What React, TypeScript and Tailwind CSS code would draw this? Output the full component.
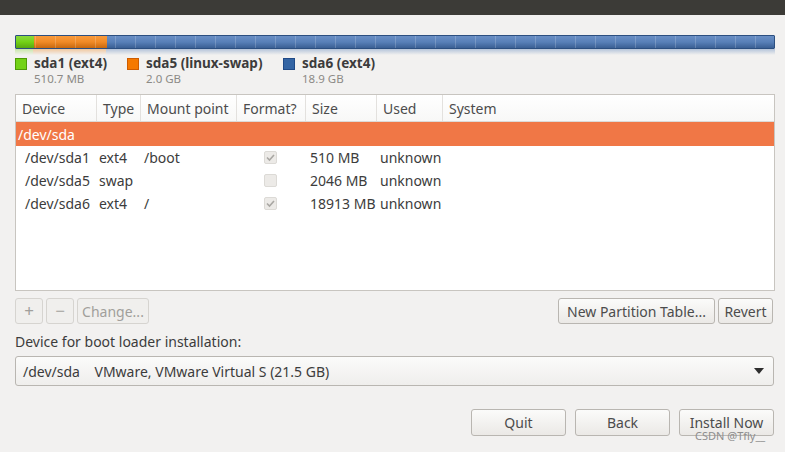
const font = { fontFamily: '"Noto Sans", "Open Sans", sans-serif' }

const columns = [
  { label: 'Device', w: 'w-[81px]' },
  { label: 'Type', w: 'w-[44px]' },
  { label: 'Mount point', w: 'w-[96px]' },
  { label: 'Format?', w: 'w-[69px]' },
  { label: 'Size', w: 'w-[71px]' },
  { label: 'Used', w: 'w-[66px]' },
  { label: 'System', w: 'flex-1' },
]

const rows = [
  { dev: '/dev/sda1', type: 'ext4', mount: '/boot', format: true, size: '510 MB', used: 'unknown' },
  { dev: '/dev/sda5', type: 'swap', mount: '', format: false, size: '2046 MB', used: 'unknown' },
  { dev: '/dev/sda6', type: 'ext4', mount: '/', format: true, size: '18913 MB', used: 'unknown' },
]

const legend = [
  { name: 'sda1 (ext4)', size: '510.7 MB', swatch: 'bg-[#73d216] border-[#4e9a06]', w: 'w-[112px]' },
  { name: 'sda5 (linux-swap)', size: '2.0 GB', swatch: 'bg-[#f57900] border-[#ce5c00]', w: 'w-[156px]' },
  { name: 'sda6 (ext4)', size: '18.9 GB', swatch: 'bg-[#3465a4] border-[#204a87]', w: 'w-[120px]' },
]

function Check({ on }: { on: boolean }) {
  return (
    <div className="w-[13px] h-[13px] rounded-[2px] border border-[#dcdad6] bg-[#eceae7] flex items-center justify-center">
      {on && (
        <svg width="11" height="11" viewBox="0 0 11 11">
          <path d="M2 5.5 L4.5 8 L9 3" fill="none" stroke="#a9a7a3" strokeWidth="1.6" />
        </svg>
      )}
    </div>
  )
}

function Btn({ children, className = '', dim = false }: { children: React.ReactNode; className?: string; dim?: boolean }) {
  return (
    <div
      className={`h-[26px] flex items-center justify-center rounded-[3px] border text-[14px] ${
        dim
          ? 'border-[#d6d4d0] bg-[#f0efed] text-[#a19f9b]'
          : 'border-[#b9b6b1] bg-gradient-to-b from-[#fbfbfa] to-[#ebe9e6] text-[#4c4c4c]'
      } ${className}`}
    >
      {children}
    </div>
  )
}

export default function App() {
  return (
    <div style={font} className="w-[785px] h-[452px] bg-[#f2f1f0] flex flex-col overflow-hidden relative">
      <div className="h-[15px] bg-[#3c3b37] shrink-0" />

      <div className="pl-[15px] pr-[11px] flex flex-col">
        {/* partition bar */}
        <div className="mt-[20px] relative h-[14px] flex border border-[#2c4f80] rounded-[1px] overflow-hidden w-[760px]">
          <div className="w-[18px] bg-gradient-to-b from-[#8ad93a] via-[#73d216] to-[#5aa812]" />
          <div className="w-[73px] bg-gradient-to-b from-[#f99a3a] via-[#f08a26] to-[#c8680e]" />
          <div className="flex-1 bg-gradient-to-b from-[#6a8fc4] via-[#5880b8] to-[#3a5f94]" />
          <div className="absolute inset-0 bg-[repeating-linear-gradient(90deg,transparent_0,transparent_19px,rgba(255,255,255,0.18)_19px,rgba(255,255,255,0.18)_20px)]" />
        </div>
        <div className="h-[6px] w-[760px] flex opacity-40">
          <div className="w-[18px] bg-gradient-to-b from-[#8ad93a] to-transparent" />
          <div className="w-[73px] bg-gradient-to-b from-[#f08a26] to-transparent" />
          <div className="flex-1 bg-gradient-to-b from-[#5880b8] to-transparent" />
        </div>

        {/* legend */}
        <div className="flex">
          {legend.map((l) => (
            <div key={l.name} className={`${l.w} flex gap-[7px]`}>
              <div className={`mt-[3px] w-[12px] h-[12px] border shrink-0 ${l.swatch}`} />
              <div className="flex flex-col">
                <span className="text-[13.5px] font-bold text-[#3c3c3c] leading-[17px]">{l.name}</span>
                <span className="text-[11.5px] text-[#8c8a86] leading-[13px]">{l.size}</span>
              </div>
            </div>
          ))}
        </div>

        {/* table */}
        <div className="mt-[9px] w-[760px] h-[197px] border border-[#c8c5c0] bg-white flex flex-col">
          <div className="h-[27px] flex bg-gradient-to-b from-white to-[#f8f8f7] border-b border-[#dcdad7] text-[14px] text-[#4c4c4c]">
            {columns.map((c, i) => (
              <div
                key={c.label}
                className={`${c.w} flex items-center px-[6px] ${i < columns.length - 1 ? 'border-r border-[#e3e1de]' : ''}`}
              >
                {c.label}
              </div>
            ))}
          </div>
          <div className="h-[24px] bg-[#f07746] text-white text-[14px] flex items-center pl-[2px]">/dev/sda</div>
          {rows.map((r) => (
            <div key={r.dev} className="h-[23px] flex items-center text-[14px] text-[#3c3c3c]">
              <div className="w-[83px] pl-[9px]">{r.dev}</div>
              <div className="w-[45px]">{r.type}</div>
              <div className="w-[120px]">{r.mount}</div>
              <div className="w-[46px]">
                <Check on={r.format} />
              </div>
              <div className="w-[70px]">{r.size}</div>
              <div>{r.used}</div>
            </div>
          ))}
        </div>

        {/* buttons under table */}
        <div className="mt-[7px] flex items-center">
          <Btn dim className="w-[28px] text-[17px]">+</Btn>
          <Btn dim className="w-[28px] ml-[3px] text-[17px]">−</Btn>
          <Btn dim className="w-[72px] ml-[3px]">Change...</Btn>
          <div className="flex-1" />
          <Btn className="w-[157px]">New Partition Table...</Btn>
          <Btn className="w-[55px] ml-[3px] mr-[1px]">Revert</Btn>
        </div>

        <div className="mt-[8px] text-[14px] text-[#3c3c3c] leading-[20px]">Device for boot loader installation:</div>

        <div className="mt-[4px] h-[30px] w-[759px] rounded-[3px] border border-[#b9b6b1] bg-gradient-to-b from-[#fbfbfa] to-[#efeeec] flex items-center px-[7px] text-[14px] text-[#3c3c3c]">
          <span className="whitespace-pre">/dev/sda    VMware, VMware Virtual S (21.5 GB)</span>
          <div className="flex-1" />
          <svg width="10" height="6" viewBox="0 0 10 6" className="mr-[2px]">
            <path d="M0 0 H10 L5 6 Z" fill="#2e2e2e" />
          </svg>
        </div>

        <div className="mt-[23px] flex justify-end gap-[9px]">
          <Btn className="w-[95px] h-[27px]">Quit</Btn>
          <Btn className="w-[95px] h-[27px]">Back</Btn>
          <Btn className="w-[95px] h-[27px]">Install Now</Btn>
        </div>
      </div>

      <div className="absolute left-[695px] top-[429px] text-[11px] text-[#8e8e8e] leading-[14px]">CSDN @Tfly__</div>
    </div>
  )
}
